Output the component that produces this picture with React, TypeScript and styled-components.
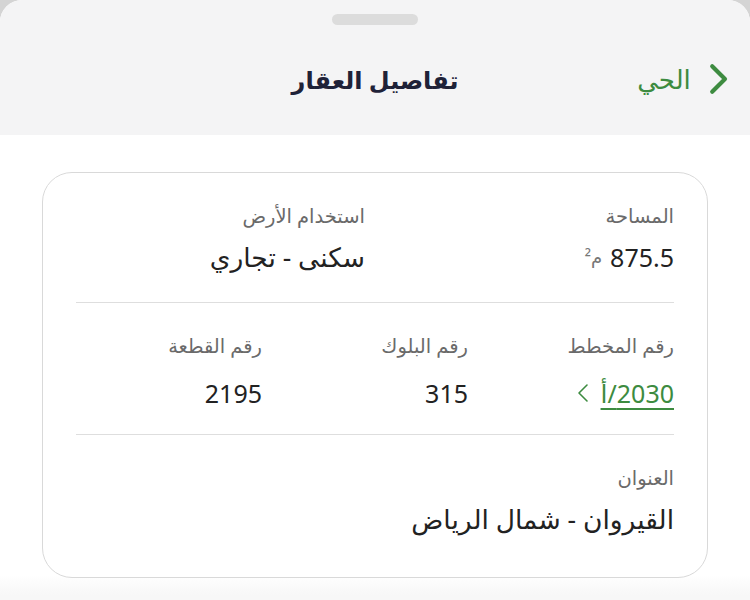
import React from "react";
import styled, { createGlobalStyle } from "styled-components";

const Global = createGlobalStyle`
  html, body { margin: 0; padding: 0; background: #d4d4d4; }
  body { font-family: "Noto Sans", "DejaVu Sans", sans-serif; }
  * { box-sizing: border-box; }
`;

const Sheet = styled.div`
  width: 750px;
  height: 600px;
  background: #ffffff;
  border-radius: 22px 22px 0 0;
  overflow: hidden;
  direction: rtl;
  display: flex;
  flex-direction: column;
`;

const Header = styled.header`
  height: 135px;
  background: #f4f4f5;
  display: flex;
  flex-direction: column;
  align-items: center;
  padding-top: 14px;
`;

const Handle = styled.div`
  width: 86px;
  height: 11px;
  border-radius: 6px;
  background: #dcdcdc;
`;

const TitleBar = styled.div`
  width: 100%;
  display: grid;
  grid-template-columns: 1fr auto 1fr;
  align-items: center;
  padding: 0 22px;
  margin-top: 36px;
`;

const Back = styled.button`
  justify-self: start;
  display: flex;
  align-items: center;
  gap: 18px;
  background: none;
  border: none;
  padding: 0;
  color: #3d8b40;
  font-family: "Noto Sans", "DejaVu Sans", sans-serif;
  font-size: 26px;
  cursor: pointer;
`;

const Title = styled.h1`
  margin: 0;
  font-size: 24px;
  font-weight: 700;
  color: #1f2238;
`;

const Body = styled.main`
  flex: 1;
  padding: 37px 42px 0;
  background: linear-gradient(#ffffff 0, #ffffff 440px, #f7f7f7 460px);
`;

const Card = styled.section`
  border: 1.5px solid #d9d9d9;
  border-radius: 30px;
  background: #ffffff;
  padding: 0 33px;
  height: 406px;
`;

const Section = styled.div<{ $cols: number; $bottom: number; $last?: boolean }>`
  display: grid;
  grid-template-columns: repeat(${(p) => p.$cols}, 1fr);
  column-gap: 20px;
  padding: 30px 0 ${(p) => p.$bottom}px;
  border-bottom: ${(p) => (p.$last ? "none" : "1.5px solid #dedede")};
`;

const Field = styled.div<{ $gap: number }>`
  display: flex;
  flex-direction: column;
  gap: ${(p) => p.$gap}px;
`;

const Label = styled.div`
  font-size: 19.5px;
  line-height: 26px;
  color: #6a6a6a;
`;

const Value = styled.div<{ $ar?: boolean; $accent?: boolean }>`
  font-size: ${(p) => (p.$ar ? 26.5 : 25)}px;
  line-height: 30px;
  color: ${(p) => (p.$accent ? "#3d8b40" : "#222")};
  display: flex;
  align-items: center;
  gap: ${(p) => (p.$accent ? 12 : 8)}px;
`;

const Unit = styled.span`
  font-size: 18px;
  color: #777;
`;

const Link = styled.a`
  color: #3d8b40;
  text-decoration: underline;
  text-underline-offset: 5px;
  text-decoration-thickness: 1.5px;
`;

const Chevron = ({ dir, size, stroke }: { dir: "left" | "right"; size: number; stroke: number }) => (
  <svg width={size * 0.6} height={size} viewBox="0 0 12 20" fill="none">
    <path
      d={dir === "right" ? "M2 2 L10 10 L2 18" : "M10 2 L2 10 L10 18"}
      stroke="currentColor"
      strokeWidth={stroke}
      strokeLinecap="round"
      strokeLinejoin="round"
    />
  </svg>
);

export default function App() {
  return (
    <>
      <Global />
      <Sheet>
        <Header>
          <Handle />
          <TitleBar>
            <Back>
              <Chevron dir="right" size={32} stroke={2.6} />
              <span>الحي</span>
            </Back>
            <Title>تفاصيل العقار</Title>
            <div />
          </TitleBar>
        </Header>
        <Body>
          <Card>
            <Section $cols={2} $bottom={30}>
              <Field $gap={13}>
                <Label>المساحة</Label>
                <Value>
                  <span>875.5</span>
                  <Unit>م²</Unit>
                </Value>
              </Field>
              <Field $gap={13}>
                <Label>استخدام الأرض</Label>
                <Value $ar>سكنى - تجاري</Value>
              </Field>
            </Section>
            <Section $cols={3} $bottom={26}>
              <Field $gap={19}>
                <Label>رقم المخطط</Label>
                <Value $accent>
                  <Link>2030/أ</Link>
                  <Chevron dir="left" size={20} stroke={1.6} />
                </Value>
              </Field>
              <Field $gap={19}>
                <Label>رقم البلوك</Label>
                <Value>315</Value>
              </Field>
              <Field $gap={19}>
                <Label>رقم القطعة</Label>
                <Value>2195</Value>
              </Field>
            </Section>
            <Section $cols={1} $bottom={0} $last>
              <Field $gap={13}>
                <Label>العنوان</Label>
                <Value $ar>القيروان - شمال الرياض</Value>
              </Field>
            </Section>
          </Card>
        </Body>
      </Sheet>
    </>
  );
}
